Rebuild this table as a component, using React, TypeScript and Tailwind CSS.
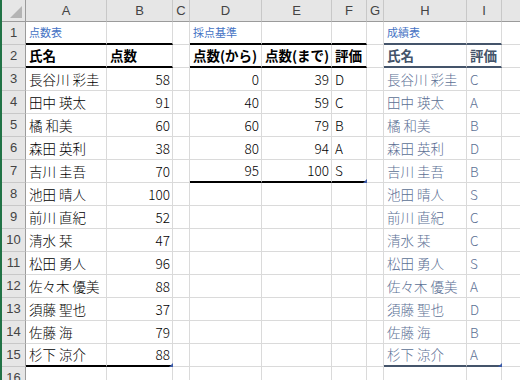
import React from "react";

type Cell = { text?: string; num?: boolean; kind?: "title" | "head" | "body" | "t3head" | "t3body"; line?: "black" | "blue"; handle?: boolean };

const cols = ["A", "B", "C", "D", "E", "F", "G", "H", "I", ""];
const widths = ["w-[81px]", "w-[66px]", "w-[17px]", "w-[72px]", "w-[70px]", "w-[35px]", "w-[17px]", "w-[83px]", "w-[35px]", "w-[64px]"];

const scores: [string, number, string][] = [
  ["長谷川 彩圭", 58, "C"],
  ["田中 瑛太", 91, "A"],
  ["橘 和美", 60, "B"],
  ["森田 英利", 38, "D"],
  ["吉川 圭吾", 70, "B"],
  ["池田 晴人", 100, "S"],
  ["前川 直紀", 52, "C"],
  ["清水 栞", 47, "C"],
  ["松田 勇人", 96, "S"],
  ["佐々木 優美", 88, "A"],
  ["須藤 聖也", 37, "D"],
  ["佐藤 海", 79, "B"],
  ["杉下 涼介", 88, "A"],
];

const rules: [number, number, string][] = [
  [0, 39, "D"],
  [40, 59, "C"],
  [60, 79, "B"],
  [80, 94, "A"],
  [95, 100, "S"],
];

function getCell(r: number, c: string): Cell {
  const inT1 = (c === "A" || c === "B") && r <= 15;
  const inT2 = (c === "D" || c === "E" || c === "F") && r <= 7;
  const inT3 = (c === "H" || c === "I") && r <= 15;
  const lastT1 = r === 15;
  const lastT2 = r === 7;
  const cell: Cell = {};

  if (inT1) {
    if (r === 1 || r === 2 || lastT1) cell.line = "black";
    if (r === 1 && c === "A") cell.text = "点数表";
    if (r === 1) cell.kind = "title";
    if (r === 2) { cell.kind = "head"; cell.text = c === "A" ? "氏名" : "点数"; }
    if (r >= 3) {
      const s = scores[r - 3];
      cell.kind = "body";
      if (c === "A") cell.text = s[0];
      else { cell.text = String(s[1]); cell.num = true; }
      if (c === "B" && lastT1) cell.handle = true;
    }
  }
  if (inT2) {
    if (r === 1 || r === 2 || lastT2) cell.line = "black";
    if (r === 1) { cell.kind = "title"; if (c === "D") cell.text = "採点基準"; }
    if (r === 2) { cell.kind = "head"; cell.text = c === "D" ? "点数(から)" : c === "E" ? "点数(まで)" : "評価"; }
    if (r >= 3) {
      const g = rules[r - 3];
      cell.kind = "body";
      if (c === "D") { cell.text = String(g[0]); cell.num = true; }
      if (c === "E") { cell.text = String(g[1]); cell.num = true; }
      if (c === "F") cell.text = g[2];
      if (c === "F" && lastT2) cell.handle = true;
    }
  }
  if (inT3) {
    if (r === 1 || r === 2 || lastT1) cell.line = "blue";
    if (r === 1) { cell.kind = "title"; if (c === "H") cell.text = "成績表"; }
    if (r === 2) { cell.kind = "t3head"; cell.text = c === "H" ? "氏名" : "評価"; }
    if (r >= 3) {
      const s = scores[r - 3];
      cell.kind = "t3body";
      cell.text = c === "H" ? s[0] : s[2];
      if (c === "I" && lastT1) cell.handle = true;
    }
  }
  return cell;
}

function textClass(kind?: Cell["kind"]) {
  switch (kind) {
    case "title":
      return "text-[11px] text-[#4472c4]";
    case "head":
      return "text-[13.5px] font-semibold text-black";
    case "t3head":
      return "text-[13.5px] font-semibold text-[#44546a]";
    case "t3body":
      return "text-[13.5px] font-light text-[#5b6f94]";
    default:
      return "text-[13.5px] font-light text-black";
  }
}

function lineClass(line?: Cell["line"]) {
  if (line === "black") return "border-b-2 border-b-black";
  if (line === "blue") return "border-b-2 border-b-[#44546a]";
  return "border-b border-b-[#dadada]";
}

export default function App() {
  const rows = Array.from({ length: 16 }, (_, i) => i + 1);

  return (
    <div
      className="w-[520px] h-[380px] overflow-hidden bg-white border-l-2 border-[#217346]"
      style={{ fontFamily: '"Noto Sans CJK JP", "Noto Sans", sans-serif' }}
    >
      {/* column headers */}
      <div className="flex h-[22px]">
        <div className="relative w-[24px] shrink-0 bg-[#e6e6e6] border-r border-r-[#9b9b9b] border-b border-b-[#9b9b9b]">
          <div className="absolute right-[3px] bottom-[3px] w-0 h-0 border-l-[12px] border-l-transparent border-b-[12px] border-b-[#b4b4b4]" />
        </div>
        {cols.map((c, i) => (
          <div
            key={i}
            className={`${widths[i]} shrink-0 flex items-center justify-center bg-[#e6e6e6] border-r border-r-[#c8c8c8] border-b border-b-[#9b9b9b] text-[13px] text-[#444]`}
            style={{ fontFamily: '"Liberation Sans", Arial, sans-serif' }}
          >
            {c}
          </div>
        ))}
      </div>

      {rows.map((r) => (
        <div key={r} className="flex h-[23px]">
          <div
            className="w-[24px] shrink-0 flex items-center justify-center bg-[#e6e6e6] border-r border-r-[#9b9b9b] border-b border-b-[#c8c8c8] text-[13px] text-[#444]"
            style={{ fontFamily: '"Liberation Sans", Arial, sans-serif' }}
          >
            {r}
          </div>
          {cols.map((c, i) => {
            const cell = getCell(r, c);
            return (
              <div
                key={i}
                className={`${widths[i]} relative shrink-0 flex items-center whitespace-nowrap overflow-visible border-r border-r-[#dadada] ${lineClass(cell.line)} ${cell.num ? "justify-end pr-[2px]" : "justify-start pl-[3px]"} ${textClass(cell.kind)}`}
              >
                {cell.text}
                {cell.handle && (
                  <div className="absolute right-[-1px] bottom-[-2px] w-0 h-0 border-l-[4px] border-l-transparent border-b-[4px] border-b-[#3b5aa8]" />
                )}
              </div>
            );
          })}
        </div>
      ))}
    </div>
  );
}
